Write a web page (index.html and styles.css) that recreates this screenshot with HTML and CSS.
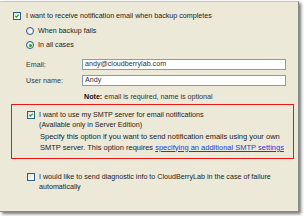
FILE: index.html
```html
<!DOCTYPE html>
<html>
<head>
<meta charset="utf-8">
<link rel="stylesheet" href="styles.css">
</head>
<body>
<div class="panel">
  <div class="row r1">
    <span class="cb"><svg viewBox="0 0 8 8" width="8" height="8"><path d="M1.6 3.9 L3.3 5.6 L6.4 2.2" fill="none" stroke="#21a121" stroke-width="1.6"/></svg></span>
    <span>I want to receive notification email when backup completes</span>
  </div>
  <div class="radios">
    <div class="row"><span class="radio"></span><span>When backup fails</span></div>
    <div class="row"><span class="radio on"></span><span>In all cases</span></div>
  </div>
  <div class="form">
    <span class="lbl">Email:</span><div class="input">andy@cloudberrylab.com</div>
    <span class="lbl">User name:</span><div class="input">Andy</div>
    <span></span><div class="note"><b>Note:</b> email is required, name is optional</div>
  </div>
  <div class="smtp">
    <div class="row top">
      <span class="cb"><svg viewBox="0 0 8 8" width="8" height="8"><path d="M1.6 3.9 L3.3 5.6 L6.4 2.2" fill="none" stroke="#21a121" stroke-width="1.6"/></svg></span>
      <div>I want to use my SMTP server for email notifications<br>(Available only in Server Edition)</div>
    </div>
    <p class="desc">Specify this option if you want to send notification emails using your own<br>SMTP server. This option requires <a href="#">specifying an additional SMTP settings</a></p>
  </div>
  <div class="row top diag">
    <span class="cb"></span>
    <div>I would like to send diagnostic info to CloudBerryLab in the case of failure<br>automatically</div>
  </div>
</div>
</body>
</html>
```
FILE: styles.css
```css
html, body {
  margin: 0;
  padding: 0;
  background: #ffffff;
  width: 304px;
  height: 216px;
  overflow: hidden;
}
.panel {
  box-sizing: border-box;
  margin-top: 1px;
  width: 299px;
  height: 211px;
  background: #ece9d8;
  border-top: 1px solid #c4c3bc;
  border-right: 1px solid #8a8a86;
  border-bottom: 1px solid #8a8a86;
  box-shadow: 2px 2px 3px rgba(0,0,0,0.55);
  font-family: Tahoma, "Liberation Sans", Arial, sans-serif;
  font-size: 7.15px;
  line-height: 10px;
  color: #222;
  padding-top: 9px;
}
.row {
  display: flex;
  align-items: center;
  height: 10px;
}
.row.top {
  align-items: flex-start;
  height: auto;
}
.r1 {
  padding-left: 13px;
  gap: 5px;
}
.cb {
  box-sizing: border-box;
  flex: none;
  width: 8px;
  height: 8px;
  border: 1px solid #2a5c8c;
  background: linear-gradient(135deg, #e0e0da, #ffffff);
  display: flex;
  align-items: center;
  justify-content: center;
}
.cb svg {
  width: 6px;
  height: 6px;
}
.radios {
  padding-left: 26px;
  margin-top: 5px;
  display: flex;
  flex-direction: column;
  gap: 4px;
}
.radios .row {
  gap: 4px;
}
.radio {
  box-sizing: border-box;
  flex: none;
  width: 8px;
  height: 8px;
  border-radius: 50%;
  border: 1px solid #2a5c8c;
  background: radial-gradient(circle at 60% 60%, #ffffff, #dcdcd4);
  display: flex;
  align-items: center;
  justify-content: center;
}
.radio.on::after {
  content: "";
  width: 3px;
  height: 3px;
  border-radius: 50%;
  background: #21a121;
}
.form {
  display: grid;
  grid-template-columns: 56px 204px;
  grid-template-rows: 11px 11px 10px;
  row-gap: 5px;
  padding-left: 26px;
  margin-top: 9px;
  align-items: center;
}
.lbl {
  color: #3a3a3a;
}
.input {
  box-sizing: border-box;
  height: 11px;
  background: #fff;
  border: 1px solid #7f9db9;
  padding-left: 2px;
  line-height: 9px;
  color: #333;
}
.note {
  margin-top: 1px;
  padding-left: 2px;
  color: #333;
}
.note b {
  font-weight: bold;
  color: #111;
}
.smtp {
  box-sizing: border-box;
  margin: 3px 0 0 11px;
  width: 283px;
  border: 1px solid #e81818;
  padding: 5px 0 5px 15px;
}
.smtp .row {
  gap: 4px;
}
.smtp .cb {
  margin-top: 1px;
}
.desc {
  margin: 2px 0 0 13px;
  line-height: 10.5px;
  font-size: 7.5px;
  color: #222;
}
.desc a {
  color: #1a3cd8;
  text-decoration: underline;
}
.diag {
  margin-top: 13px;
  padding-left: 27px;
  gap: 4px;
}
.diag .cb {
  margin-top: 1px;
  width: 8px;
  height: 8px;
}
```
